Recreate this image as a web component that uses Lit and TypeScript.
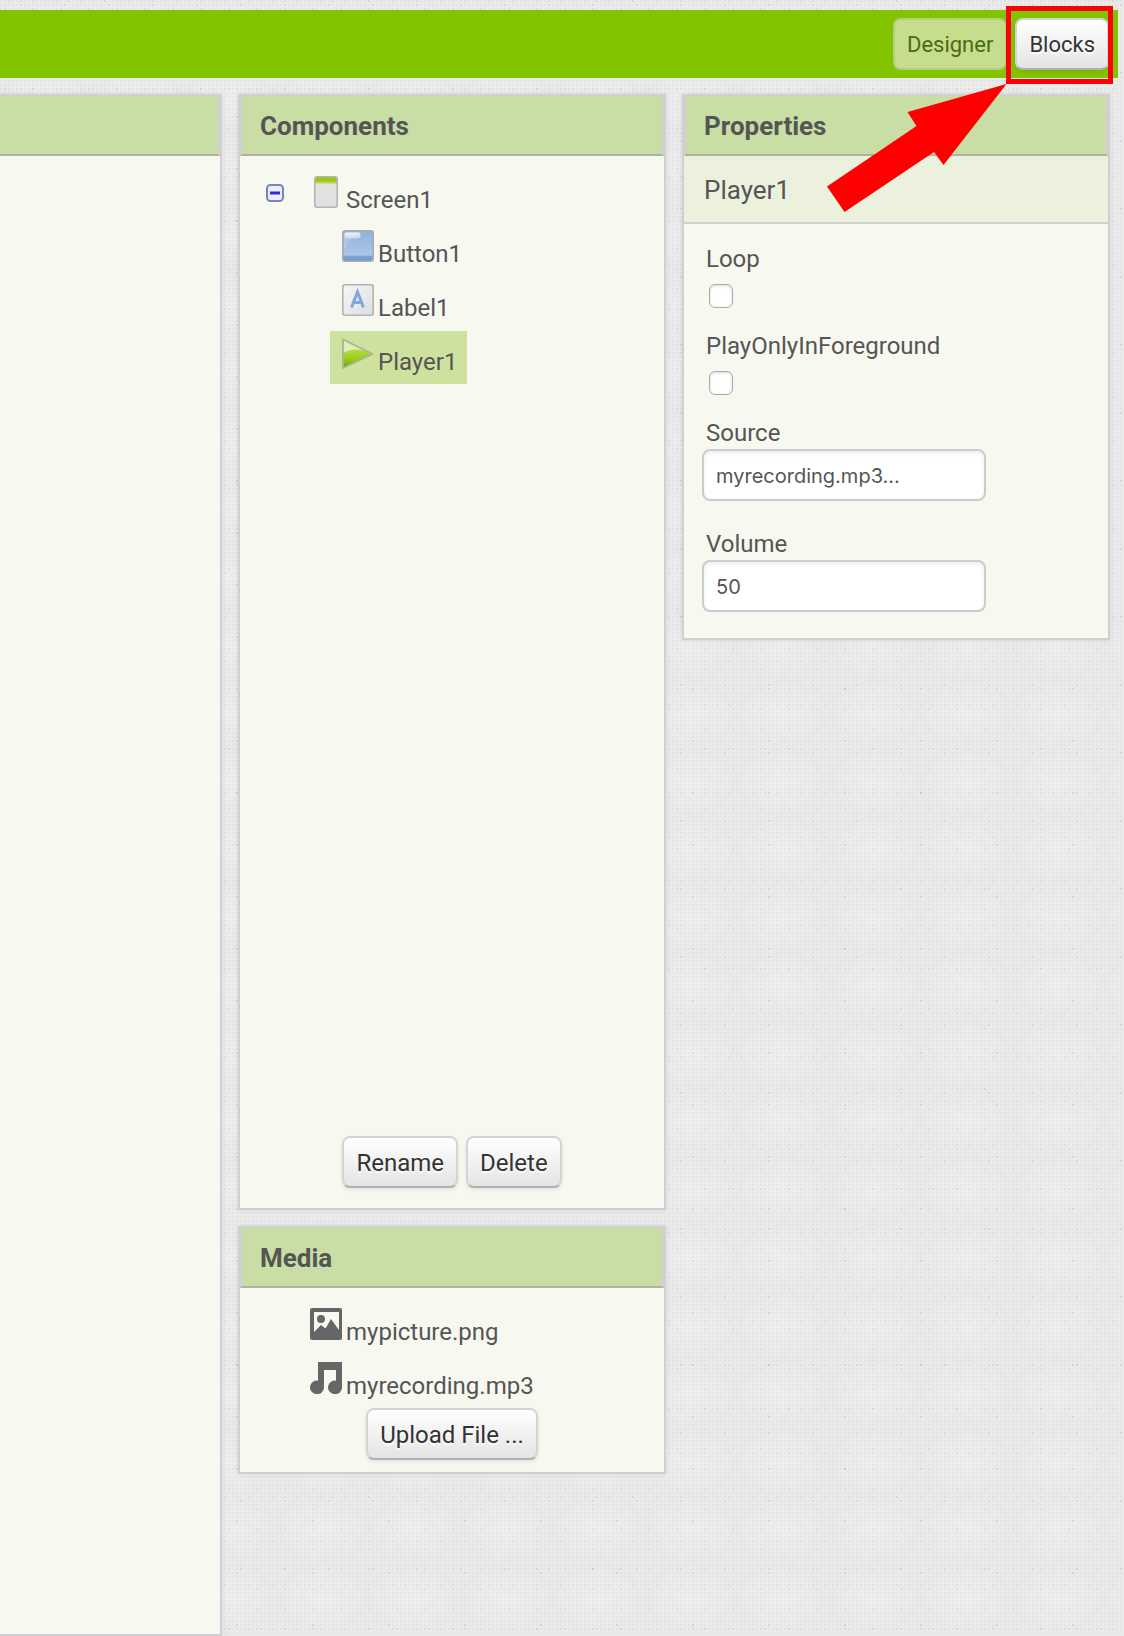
import { LitElement, html, css, svg, TemplateResult } from "lit";
import { customElement, property } from "lit/decorators.js";

const screenIcon = html`<svg class="icon" viewBox="0 0 32 32" aria-hidden="true">
  <defs><linearGradient id="scr" x1="0" y1="0" x2="0" y2="1">
    <stop offset="0" stop-color="#9ac400" /><stop offset=".15" stop-color="#a0c81c" />
    <stop offset=".25" stop-color="#dfe4d0" /><stop offset=".32" stop-color="#e3e3e3" /><stop offset="1" stop-color="#e0e0e0" />
  </linearGradient></defs>
  <rect x="4.8" y="0.8" width="22.4" height="30.4" rx="2.4" fill="url(#scr)" stroke="#b4b4b4" stroke-width="1.6" />
</svg>`;

const buttonIcon = html`<svg class="icon" viewBox="0 0 32 32" aria-hidden="true">
  <defs>
    <linearGradient id="btn" x1="0" y1="0" x2="0" y2="1">
      <stop offset="0" stop-color="#8fb2dc" /><stop offset=".8" stop-color="#abc6e6" />
      <stop offset=".84" stop-color="#7fa4d4" /><stop offset="1" stop-color="#6f97cb" />
    </linearGradient>
    <linearGradient id="gloss" x1="0" y1="0" x2="0" y2="1">
      <stop offset="0" stop-color="#fff" stop-opacity=".8" /><stop offset="1" stop-color="#fff" stop-opacity=".4" />
    </linearGradient>
  </defs>
  <rect x="0.8" y="0.8" width="30.4" height="30.4" rx="2.4" fill="url(#btn)" stroke="#aaaaae" stroke-width="1.6" />
  <path d="M2 2H20Q6 8 2 21Z" fill="#fff" opacity=".18" />
  <rect x="2.5" y="2.5" width="16" height="6" rx="2.5" fill="url(#gloss)" />
</svg>`;

const labelIcon = html`<svg class="icon" viewBox="0 0 32 32" aria-hidden="true">
  <defs><linearGradient id="lbl" x1="0" y1="0" x2="1" y2="1">
    <stop offset="0" stop-color="#f6f6f6" /><stop offset="1" stop-color="#dedede" />
  </linearGradient></defs>
  <rect x="0.8" y="0.8" width="30.4" height="30.4" rx="2.4" fill="url(#lbl)" stroke="#b2b2b2" stroke-width="1.6" />
  <path d="M9.5 23.5 15.5 8 21.5 23.5M11.5 18.5H19.5" fill="none" stroke="#7fa8dc" stroke-width="3" />
</svg>`;

const playerIcon = html`<svg class="icon" viewBox="0 0 32 32" aria-hidden="true">
  <defs><linearGradient id="ply" x1="0" y1="0" x2="0" y2="1">
    <stop offset="0" stop-color="#b4dc3c" /><stop offset=".6" stop-color="#98c814" /><stop offset="1" stop-color="#6fa000" />
  </linearGradient></defs>
  <path d="M1 1.5 30.5 16 1 30Z" fill="#e0eebc" />
  <path d="M1.5 15Q8 11 15 11.5Q23 12 29 16L1.5 29.5Z" fill="url(#ply)" />
  <path d="M1 1.5 30.5 16 1 30Z" fill="none" stroke="#a9b392" stroke-width="1.8" stroke-linejoin="round" />
</svg>`;

const pictureIcon = html`<svg class="icon" viewBox="0 0 32 32" aria-hidden="true">
  <rect width="32" height="32" rx="2" fill="#666" />
  <path d="M4 4H29V22L21 11 15.5 20.5 11 17 4 24Z" fill="#f7f8f0" />
  <circle cx="11" cy="11" r="4" fill="#666" />
</svg>`;

const musicIcon = html`<svg class="icon" viewBox="0 0 32 32" aria-hidden="true">
  <path d="M8 0H32V25.5A7 6.8 0 1 1 26 18.7V8H14V25.5A7 6.8 0 1 1 8 18.7Z" fill="#666" />
</svg>`;

@customElement("ai-panel")
class AiPanel extends LitElement {
  static styles = css`
    :host {
      display: flex;
      flex-direction: column;
      box-sizing: border-box;
      background: #f7f8f0;
      border: 2px solid #d0d0d0;
      box-shadow: 0 0 6px rgba(0, 0, 0, 0.08);
      min-width: 0;
    }
    :host([flush]) {
      border-left: 0;
    }
    .heading {
      margin: 0;
      box-sizing: border-box;
      height: 60px;
      padding: 0 18px;
      font-size: 26px;
      line-height: 60px;
      font-weight: 700;
      background: #c8dea4;
      border: solid #d0d0d0;
      border-width: 0 2px 2px;
      border-bottom-color: #b0b0a8;
    }
    :host([flush]) .heading {
      border-left: 0;
    }
  `;
  @property() heading = "";
  @property({ type: Boolean, reflect: true }) flush = false;
  render() {
    return html`<h2 class="heading">${this.heading}</h2><slot></slot>`;
  }
}

interface Entry {
  name: string;
  icon: TemplateResult;
  selected?: boolean;
}

@customElement("app-root")
class AppRoot extends LitElement {
  static styles = css`
    :host {
      display: flex;
      flex-direction: column;
      box-sizing: border-box;
      min-height: 100vh;
      padding-top: 10px;
      font-family: Roboto, "Liberation Sans", sans-serif;
      font-size: 24px;
      line-height: 28px;
      color: #555;
      background-color: #eaeaea;
      background-image:
        conic-gradient(at 2px 2px, transparent 75%, rgba(0, 0, 0, 0.07) 0),
        conic-gradient(at 2px 2px, transparent 75%, rgba(0, 0, 0, 0.05) 0),
        conic-gradient(at 2px 2px, transparent 75%, rgba(0, 0, 0, 0.04) 0),
        conic-gradient(at 2px 2px, transparent 75%, rgba(0, 0, 0, 0.03) 0),
        conic-gradient(at 2px 2px, transparent 75%, rgba(0, 0, 0, 0.03) 0),
        radial-gradient(ellipse, rgba(255, 255, 255, 0.2), transparent 70%);
      background-size: 76px 52px, 44px 68px, 28px 20px, 12px 44px, 4px 4px, 92px 68px;
      background-position: 8px 12px, 20px 4px, 4px 8px, 8px 0, 0 0, 0 0;
    }
    .bar {
      display: flex;
      justify-content: flex-end;
      align-items: center;
      gap: 8px;
      height: 68px;
      margin-right: 6px;
      padding-right: 9px;
      font-size: 22px;
      background: #82c400;
    }
    .btn {
      display: block;
      box-sizing: border-box;
      height: 52px;
      padding: 2px 12px 0;
      font: inherit;
      color: #333;
      text-shadow: 0 2px 2px #fff;
      background: linear-gradient(#fff, #e4e4e4);
      border: 2px solid #d4d4d4;
      border-bottom-color: #b0b0b0;
      border-radius: 8px;
      box-shadow: 0 2px 4px rgba(0, 0, 0, 0.08);
      cursor: pointer;
    }
    .btn:disabled {
      color: #4c6b12;
      text-shadow: none;
      background: #c5dd8c;
      border-color: #b4cf7c;
      box-shadow: none;
    }
    .marked {
      position: relative;
    }
    .frame {
      position: absolute;
      inset: -12px -4px -14px -9px;
      border: 5px solid #f00;
      pointer-events: none;
    }
    .arrow {
      position: absolute;
      top: 66px;
      right: 102px;
      width: 180px;
      height: 128px;
      pointer-events: none;
    }
    .columns {
      flex: 1;
      display: grid;
      grid-template-columns: 222fr 428fr 428fr;
      gap: 16px;
      padding: 16px 14px 0 0;
    }
    .column {
      display: flex;
      flex-direction: column;
      gap: 16px;
      min-width: 0;
    }
    .tree {
      display: flex;
      align-items: flex-start;
      min-height: 967px;
      padding: 13px 0 0 26px;
    }
    .toggle {
      width: 18px;
      height: 18px;
      padding: 0;
      margin: 15px 14px 0 0;
      border: 0;
      background: none;
      cursor: pointer;
    }
    .toggle svg {
      display: block;
    }
    .list {
      display: flex;
      flex-direction: column;
      align-items: flex-start;
      gap: 1px;
      margin: 0;
      padding: 0;
      list-style: none;
    }
    .children {
      padding-left: 32px;
    }
    .item {
      display: flex;
      align-items: baseline;
      gap: 4px;
      box-sizing: border-box;
      height: 53px;
      padding: 7px 10px 0 12px;
      color: inherit;
      text-decoration: none;
    }
    .selected {
      background: #cfe19e;
    }
    .icon {
      width: 32px;
      height: 32px;
      flex: none;
    }
    .actions {
      display: flex;
      justify-content: center;
      gap: 8px;
      padding-bottom: 20px;
    }
    .media {
      padding: 13px 0 0 58px;
    }
    .upload {
      padding-bottom: 12px;
    }
    .target {
      height: 66px;
      padding: 0 20px;
      font-size: 26px;
      line-height: 68px;
      background: #ecf1dd;
      border-bottom: 2px solid #d0d0d0;
    }
    .fields {
      display: flex;
      flex-direction: column;
      align-items: flex-start;
      padding: 21px 18px 26px;
    }
    .field-label {
      padding-left: 4px;
    }
    .check {
      appearance: none;
      box-sizing: border-box;
      width: 24px;
      height: 24px;
      margin: 11px 7px 24px;
      background: #fff;
      border: 1px solid #aaa;
      border-radius: 6px;
      box-shadow: inset 0 1px 3px rgba(0, 0, 0, 0.15);
    }
    .check:checked {
      background: #82c400;
    }
    .text {
      box-sizing: border-box;
      width: 284px;
      max-width: 100%;
      height: 52px;
      margin: 2px 0 29px;
      padding: 2px 12px 0;
      font-family: Inter, "Liberation Sans", sans-serif;
      font-size: 20px;
      color: #555;
      background: #fff;
      border: 2px solid #ccc;
      border-radius: 8px;
      box-shadow: inset 0 2px 4px rgba(0, 0, 0, 0.08);
    }
    .text:last-child {
      margin-bottom: 0;
    }
  `;

  private components: Entry[] = [
    { name: "Button1", icon: buttonIcon },
    { name: "Label1", icon: labelIcon },
    { name: "Player1", icon: playerIcon, selected: true },
  ];
  private media: Entry[] = [
    { name: "mypicture.png", icon: pictureIcon },
    { name: "myrecording.mp3", icon: musicIcon },
  ];

  private row(n: Entry) {
    return html`<li>
      <a class="item ${n.selected ? "selected" : ""}" href="#${n.name}">${n.icon}<span>${n.name}</span></a>
    </li>`;
  }

  render() {
    return html`
      <header class="bar">
        <button class="btn" disabled>Designer</button>
        <div class="marked">
          <button class="btn">Blocks</button>
          <div class="frame"></div>
          <svg class="arrow" viewBox="0 0 180 128" aria-hidden="true">
            ${svg`<path fill="#f00" d="M179.5 0 80.5 28 89.5 42 0 102.5 17.5 128 107 68 116.5 81Z" />`}
          </svg>
        </div>
      </header>
      <main class="columns">
        <ai-panel flush></ai-panel>
        <div class="column">
          <ai-panel heading="Components">
            <div class="tree">
              <button class="toggle" aria-label="Collapse Screen1">
                <svg width="18" height="18" viewBox="0 0 18 18">
                  <rect x="1" y="1" width="16" height="16" rx="3.5" fill="#eceefa" stroke="#7485c4" stroke-width="2" />
                  <rect x="4" y="7.5" width="10" height="3" fill="#3a28e0" />
                </svg>
              </button>
              <ul class="list">
                ${this.row({ name: "Screen1", icon: screenIcon })}
                <li><ul class="list children">${this.components.map((n) => this.row(n))}</ul></li>
              </ul>
            </div>
            <div class="actions">
              <button class="btn">Rename</button>
              <button class="btn">Delete</button>
            </div>
          </ai-panel>
          <ai-panel heading="Media">
            <ul class="list media">${this.media.map((n) => this.row(n))}</ul>
            <div class="actions upload"><button class="btn">Upload File ...</button></div>
          </ai-panel>
        </div>
        <div class="column">
          <ai-panel heading="Properties">
            <div class="target">Player1</div>
            <div class="fields">
              <label class="field-label" for="loop">Loop</label>
              <input class="check" type="checkbox" id="loop" />
              <label class="field-label" for="foreground">PlayOnlyInForeground</label>
              <input class="check" type="checkbox" id="foreground" />
              <label class="field-label" for="source">Source</label>
              <input class="text" type="text" id="source" value="myrecording.mp3..." />
              <label class="field-label" for="volume">Volume</label>
              <input class="text" type="text" id="volume" value="50" />
            </div>
          </ai-panel>
        </div>
      </main>
    `;
  }
}
